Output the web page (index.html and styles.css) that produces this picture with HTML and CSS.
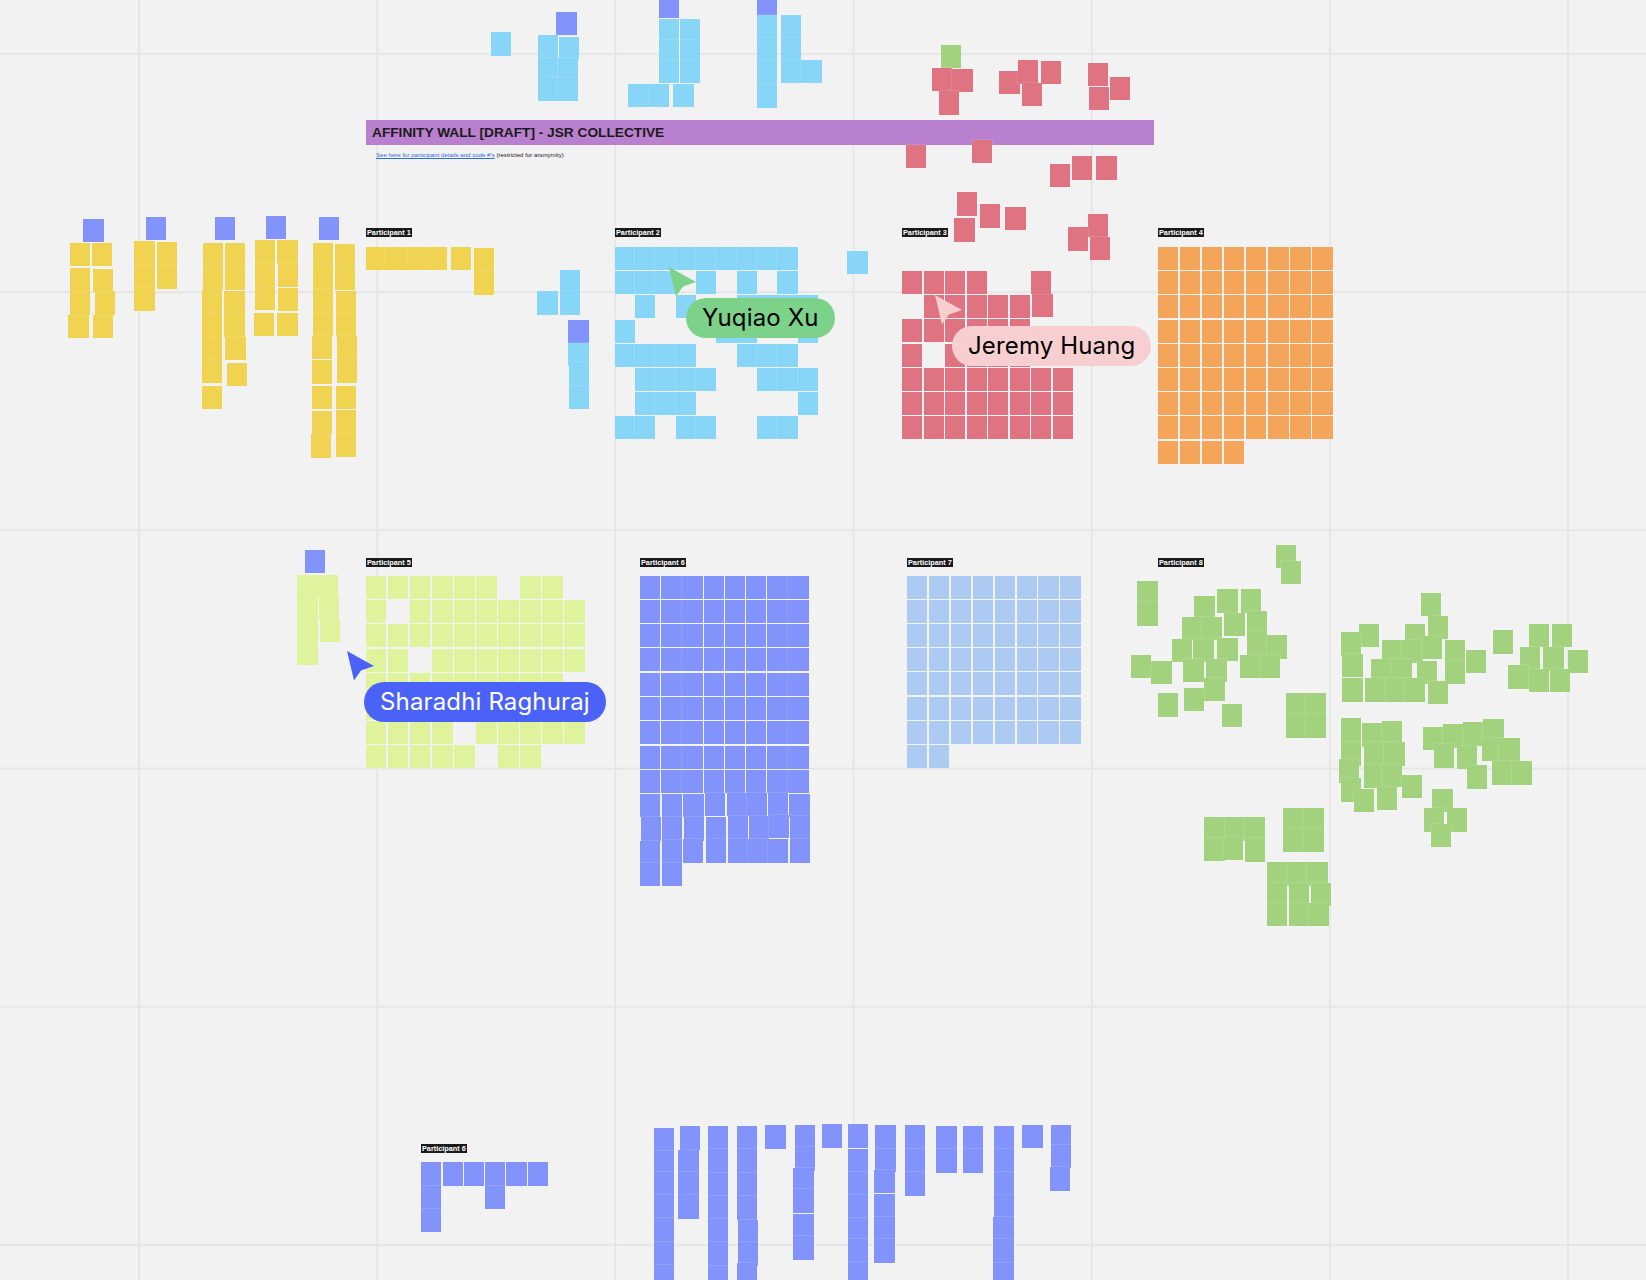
FILE: index.html
```html
<!DOCTYPE html>
<html>
<head>
    <title>Affinity Wall</title>
    <link rel="stylesheet" href="styles.css">
</head>
<body>
    <div class="board">
        <div class="title-bar">AFFINITY WALL [DRAFT] - JSR COLLECTIVE</div>
        <p class="sub-note"><a href="#">See here for participant details and code #'s</a> (restricted for anonymity)</p>

        <div class="tag tag-p1">Participant 1</div>
        <div class="tag tag-p2">Participant 2</div>
        <div class="tag tag-p3">Participant 3</div>
        <div class="tag tag-p4">Participant 4</div>
        <div class="tag tag-p5">Participant 5</div>
        <div class="tag tag-p6">Participant 6</div>
        <div class="tag tag-p7">Participant 7</div>
        <div class="tag tag-p8">Participant 8</div>
        <div class="tag tag-p6b">Participant 6</div>

        <!-- sticky notes get added here by board.js -->
        <div id="notes"></div>

        <div class="cursor cursor-green">
            <svg class="arrow" width="28" height="30" viewBox="0 0 28 30"><polygon points="0,0 27,15 14,19.5 7,29.5"/></svg>
            <div class="cursor-label">Yuqiao Xu</div>
        </div>
        <div class="cursor cursor-pink">
            <svg class="arrow" width="28" height="30" viewBox="0 0 28 30"><polygon points="0,0 27,15 14,19.5 7,29.5"/></svg>
            <div class="cursor-label">Jeremy Huang</div>
        </div>
        <div class="cursor cursor-blue">
            <svg class="arrow" width="28" height="30" viewBox="0 0 28 30"><polygon points="0,0 27,15 14,19.5 7,29.5"/></svg>
            <div class="cursor-label">Sharadhi Raghuraj</div>
        </div>
    </div>
    <script src="board.js"></script>
</body>
</html>
```

FILE: styles.css
```css
body {
    margin: 0;
    background-color: #f2f2f2;
    font-family: "Liberation Sans", Arial, sans-serif;
}
.board {
    position: relative;
    width: 1646px;
    height: 1280px;
    overflow: hidden;
    background-color: #f2f2f2;
    /* the board grid */
    background-image:
        linear-gradient(#e6e6e6 2px, transparent 2px),
        linear-gradient(90deg, #e6e6e6 2px, transparent 2px);
    background-size: 238.2px 238.2px;
    background-position: 138px 53px;
}
.title-bar {
    position: absolute;
    left: 366px;
    top: 120px;
    width: 782px;
    height: 25px;
    padding-left: 6px;
    line-height: 25px;
    font-size: 13.7px;
    font-weight: bold;
    color: #1a1a1a;
    background-color: rgba(180, 118, 204, 0.92);
}
.sub-note {
    position: absolute;
    left: 376px;
    top: 151px;
    margin: 0;
    font-size: 6.1px;
    line-height: 7px;
    color: #1a1a1a;
    white-space: nowrap;
}
.sub-note a {
    color: #2f6be8;
}

/* black participant tags */
.tag {
    position: absolute;
    height: 9px;
    padding: 0 1px;
    line-height: 9px;
    font-size: 7.3px;
    font-weight: bold;
    color: #fff;
    background-color: #1a1a1a;
    white-space: nowrap;
}
.tag-p1 { left: 366px; top: 228px; }
.tag-p2 { left: 615px; top: 228px; }
.tag-p3 { left: 902px; top: 228px; }
.tag-p4 { left: 1158px; top: 228px; }
.tag-p5 { left: 366px; top: 558px; }
.tag-p6 { left: 640px; top: 558px; }
.tag-p7 { left: 907px; top: 558px; }
.tag-p8 { left: 1158px; top: 558px; }
.tag-p6b { left: 421px; top: 1144px; }

/* sticky notes */
.note {
    position: absolute;
    width: 20.4px;
    height: 23.4px;
    box-shadow: 0 0 1px rgba(255, 255, 255, 0.7);
}
.wall-note {
    height: 23px; /* keeps the light gap between rows */
}
.yellow { background-color: #efd351; }
.sky { background-color: #88d6f7; }
.indigo { background-color: #8294fb; }
.red { background-color: #e07382; }
.orange { background-color: #f4a55a; }
.lime { background-color: #def39b; }
.pale { background-color: #adcbf2; }
.green { background-color: #a3d27e; }

/* other people's cursors */
.cursor {
    position: absolute;
    color: #000;
}
.arrow {
    position: absolute;
    left: 0;
    top: 0;
    fill: currentColor;
}
.cursor-label {
    display: inline-block;
    margin: 31px 0 0 17px;
    padding: 0 16px;
    height: 40px;
    line-height: 40px;
    border-radius: 20px;
    font-family: Inter, "Noto Sans", sans-serif;
    font-size: 24px;
    letter-spacing: 0.15px;
    white-space: nowrap;
}
.cursor-green { left: 669px; top: 267px; color: #7dd28a; }
.cursor-pink { left: 935px; top: 295px; color: #f8cfd0; }
.cursor-blue { left: 347px; top: 651px; color: #4a62f7; }
.cursor-green .cursor-label { background-color: #7dd28a; color: #000; }
.cursor-pink .cursor-label { background-color: #f8cfd0; color: #000; }
.cursor-blue .cursor-label { background-color: #4a62f7; color: #fff; }
```

FILE: board.js
```js
// Sticky notes on the board. Walls are rows of 1/0, loose notes are x,y pairs.
const holder = document.getElementById('notes');

function addNote(classes, x, y) {
    const note = document.createElement('div');
    note.className = 'note ' + classes;
    note.style.left = x + 'px';
    note.style.top = y + 'px';
    holder.appendChild(note);
}

function wall(color, x0, y0, dx, dy, rows) {
    rows.forEach((row, r) => {
        row.split('').forEach((cell, c) => {
            if (cell === '1') addNote(color + ' wall-note', x0 + c * dx, y0 + r * dy);
        });
    });
}

function loose(color, points) {
    points.forEach(p => addNote(color, p[0], p[1]));
}

// yellow, top left
loose('yellow', [
    [69.7,243],[92,243],[69.7,268],[93,269],[69.7,291.3],[95,291.3],[68.3,314.7],[93,314.7],
    [134.3,241.3],[157,242],[134.3,264.7],[157,265.3],[134.3,287.7],
    [203,243],[224.7,243],[203,266.3],[224.7,266.3],[202,290.3],[224.3,291.3],[202,313.3],[224.3,314],
    [202,336.7],[225.3,336.7],[202,359.7],[227,362.7],[202,386],
    [255,240.3],[277.3,240.3],[255,263.7],[278,263.7],[255,287],[278,287.7],[254,313],[277.3,313],
    [313,243],[335,244],[313,266.3],[335,266.3],[313,289.3],[336,291],[313,312.7],[336,313.3],
    [312,336],[337,336],[312,360.3],[337,359.3],[312,386],[336,386],[312,411],[336,410],[310.7,434.3],[336,433.3],
    [366,247],[386.3,247],[406.6,247],[427,247],[450.7,247],[474,248.3],[474,271.7]
]);
loose('indigo', [
    [83.3,219],[145.7,216.7],[214.7,216.7],[266,216],[318.7,217],
    [556.3,11.7],[659,-5.3],[756.7,-8],[568.3,319.7],[304.7,550]
]);

// light blue, top and middle
loose('sky', [
    [491,32.3],[537.7,34.7],[537.7,57.7],[537.7,77.3],[558.7,37],[558,57.7],[557.3,78],
    [659,19],[659,40],[659,60],[679.7,19],[679.7,40],[680,60],[628.3,83.7],[648.7,83.7],[673.3,83.7],
    [756.7,15.3],[756.7,38.3],[756.7,61.3],[756.7,85],[781,15.3],[781,38.3],[781,60],[801.3,60],
    [847.3,251],[537.3,291.3],[560,270.3],[560,291.3],[568.3,343],[569,362.3],[569,385.7]
]);
wall('sky', 614.7, 247, 20.33, 24.2, [
    '111111111',
    '111010101',
    '0101001111',
    '1000011001',
    '1111001110',
    '0111100111',
    '0111000001',
    '1101100110'
]);

// red
loose('green', [[941,45]]);
loose('red', [
    [931.7,68],[952.3,69],[939,91.3],[999.3,70.7],[1018,60.3],[1040.7,61],[1022,82.7],
    [1087.7,63],[1110,76.7],[1089,86.7],[906,145],[971.7,139.7],
    [1050,164],[1071.7,156.3],[1096.3,156.3],[957,192.3],[979.7,204.3],[1005.3,207],[954.3,218.3],
    [1087.7,213.7],[1067.7,227.3],[1090,237],[1032.3,294]
]);
wall('red', 902, 271, 21.5, 24.2, [
    '11110010',
    '01111100',
    '11111100',
    '10111100',
    '11111111',
    '11111111',
    '11111111'
]);

// orange
wall('orange', 1157.7, 247, 22.1, 24.2, [
    '11111111','11111111','11111111','11111111','11111111','11111111','11111111','11111111','11110000'
]);

// lime
loose('lime', [
    [297.3,574.7],[317.7,574.7],[297.3,597.7],[319,597],[297.3,620],[320,618.7],[297.3,641.7]
]);
wall('lime', 366, 576, 22.05, 24.2, [
    '1111110110',
    '1011111111',
    '1111111111',
    '1101111111',
    '1111111110',
    '1111111111',
    '1111011111',
    '1111101100'
]);

// indigo wall
wall('indigo', 640, 575.5, 21.2, 24.3, [
    '11111111','11111111','11111111','11111111','11111111','11111111','11111111','11111111','11111111'
]);
loose('indigo', [
    [640,793.7],[662,793.7],[683.3,793.7],[704.7,792.7],[727,793],[746.7,793],[768,793],[789.3,793.7],
    [641,817.3],[662,817.3],[684,817.3],[705.7,817],[727.7,816],[748.7,816],[769,815],[790,816],
    [640,841],[662,840.3],[683,839.3],[705.7,839.3],[727.7,839.3],[748,839.3],[768,839.3],[790,839.3],
    [640,862.7],[662,862.7]
]);

// pale blue
wall('pale', 907, 575.5, 21.9, 24.2, [
    '11111111','11111111','11111111','11111111','11111111','11111111','11111111','11000000'
]);

// green scatter
loose('green', [
    [1275.7,545],[1280.7,561],[1137.3,580.7],[1137.3,602.3],[1194.3,596.3],[1217.3,589.3],[1240.7,589.3],
    [1224.3,612.7],[1246.7,610.7],[1246.7,631.3],[1266.7,635.3],[1181.7,616.7],[1201.7,616.7],
    [1171.7,638.7],[1193.3,638.7],[1217.3,637.7],[1131,654.7],[1151.3,660.7],[1183.3,658.7],[1206.3,658.7],
    [1239.7,654.7],[1259.7,654.7],[1204.3,678],[1184,688],[1157.7,693.3],[1222,703.7],
    [1285.7,693.3],[1305.7,693.3],[1285.7,714.3],[1305.7,714.3],
    [1420.7,592.7],[1427.7,615.7],[1358.7,624],[1341,632.3],[1342.3,654],[1342.3,678.3],
    [1404.7,624],[1382,640],[1402.3,640],[1421.7,635.7],[1371,658.7],[1391.3,658.7],[1416.7,661],
    [1365.3,678.3],[1385.7,678.3],[1404.3,678.3],[1445,640],[1445,660.7],[1427.7,681],[1466,649.7],
    [1492.7,630.3],[1528.7,624],[1551.7,624],[1519.7,647.3],[1543.3,647.3],[1567.7,649.7],
    [1508.3,665.3],[1529,668.7],[1549.7,668.7],
    [1341,718.3],[1361.7,723.3],[1381.7,721.3],[1341,742.3],[1364.3,742.3],[1384.3,742.3],
    [1339,759.3],[1364.3,765],[1381.7,764],[1341,778.3],[1353.7,789],[1377,787],[1402,774.7],
    [1422.7,727],[1442.7,724.3],[1463,722.3],[1483.3,719],[1434,744.3],[1457,745.7],[1482,738],[1499.3,738],
    [1467,765.3],[1492,761.3],[1512,761.3],[1432.3,789],[1423.7,808.3],[1446.7,808.3],[1431,823.7],
    [1204.3,817.3],[1224.7,817.3],[1244.7,817.3],[1204.3,837.7],[1222.7,836.7],[1244.7,838.3],
    [1283,808.3],[1303.3,808.3],[1283,828.7],[1303.3,828.7],
    [1266.7,862.3],[1286.7,862.3],[1307.3,862.3],[1266.7,882.7],[1289,882.7],[1311,882.7],
    [1266.7,903],[1289,903],[1308.7,903]
]);

// bottom indigo columns
loose('indigo', [
    [420.8,1162.3],[442.5,1162.3],[463.8,1162.3],[485,1162.3],[506.3,1162.3],[527.5,1162.3],
    [420.8,1185.7],[484.6,1185.7],[420.8,1208.7],
    [653.7,1128.3],[653.7,1150.7],[653.7,1172.3],[653.7,1195.3],[653.7,1218.3],[653.7,1241.7],[653.7,1265],
    [679.7,1126.3],[678.4,1150],[678.4,1172.3],[678.4,1195.3],
    [707.5,1126.3],[707.5,1149.3],[707.5,1173.3],[707.5,1196.3],[707.5,1219.3],[707.5,1242.3],[707.5,1266],
    [736.5,1126.3],[736.5,1149.3],[736.5,1173.3],[736.5,1196.3],[737.8,1219.7],[737.8,1242.3],[736.5,1263.3],
    [765.2,1125.3],
    [794.6,1125.3],[794.6,1147.3],[793.3,1168.3],[793.3,1189.3],[793.3,1214],[793.3,1236.3],
    [821.5,1124.3],
    [848,1124.3],[848,1149],[848,1172.3],[848,1194.7],[848,1217.7],[848,1239.3],[848,1262.3],
    [875.3,1125.3],[875.3,1148.7],[874.4,1169.7],[874.4,1194],[874.4,1217.3],[874.4,1239.3],
    [904.8,1125.3],[904.8,1148.7],[904.8,1172.3],
    [936.4,1126.3],[936.4,1149.3],[962.9,1126.3],[962.9,1149.3],
    [993.7,1126.3],[993.7,1149.3],[993.7,1172.3],[993.7,1194.7],[993.2,1217.3],[993.2,1239.3],[993.2,1263],
    [1022.3,1125],
    [1050.9,1125],[1050.9,1145],[1050,1167.3]
]);
```
